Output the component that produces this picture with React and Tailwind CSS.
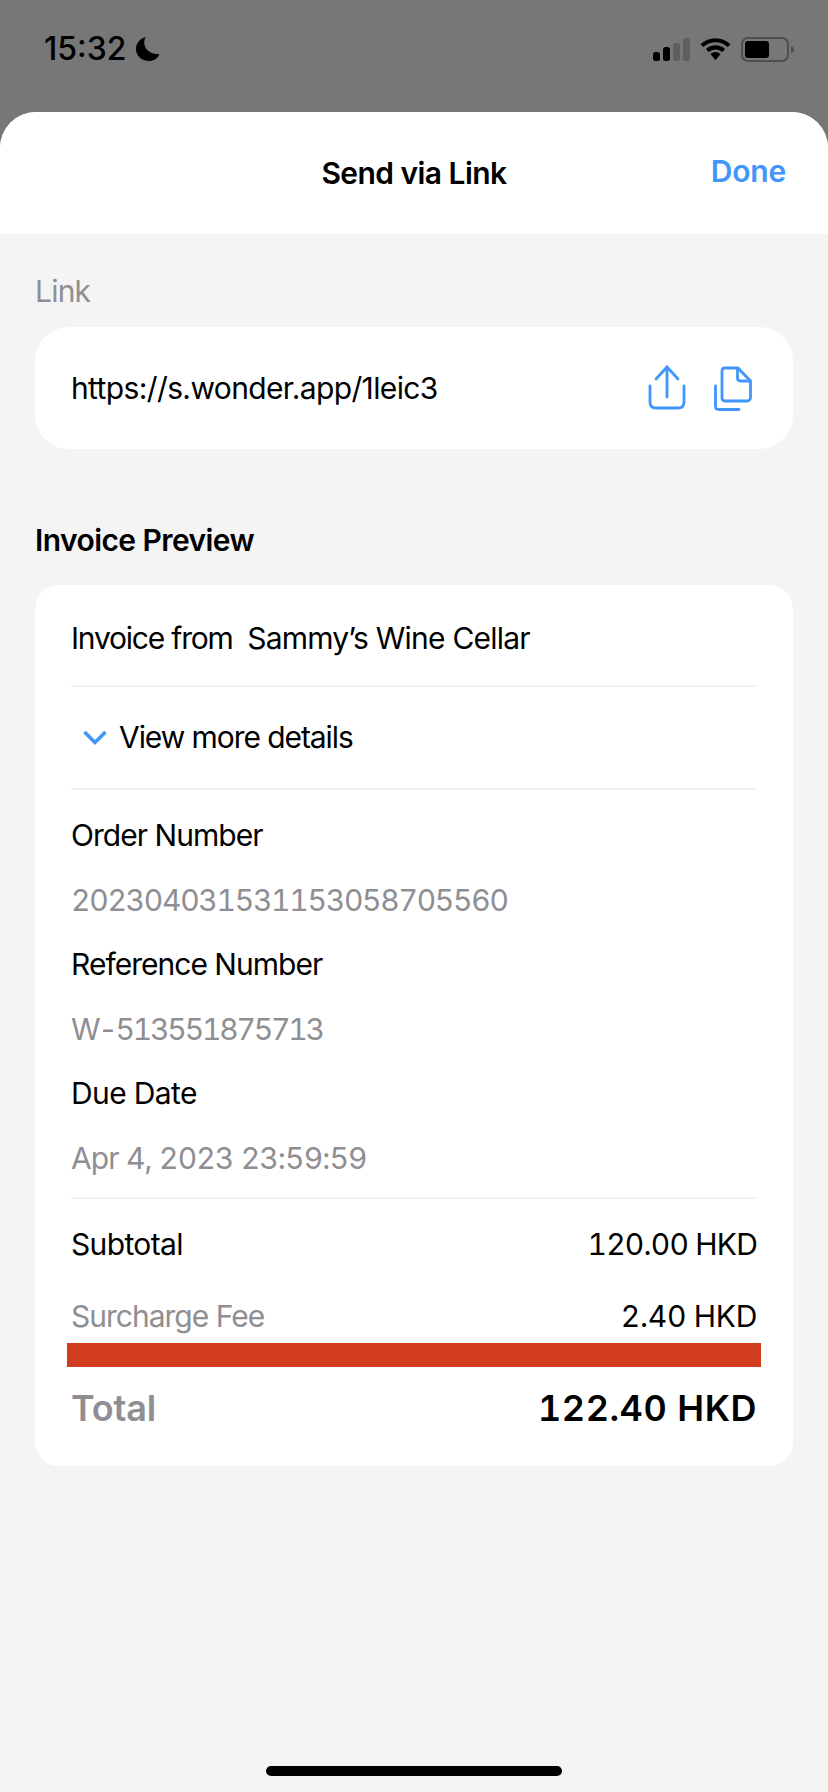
const blue = "#4096fb";

function Signal() {
  return (
    <svg width="37" height="23" viewBox="0 0 37 23" aria-hidden="true">
      <rect x="0" y="14" width="7" height="9" rx="2.5" fill="#000" />
      <rect x="10" y="9" width="7" height="14" rx="2.5" fill="#000" />
      <rect x="20" y="5" width="7" height="18" rx="2.5" fill="#5f5f5f" />
      <rect x="30" y="0" width="7" height="23" rx="2.5" fill="#5f5f5f" />
    </svg>
  );
}

function Wifi() {
  return (
    <svg width="31" height="24" viewBox="0 0 32 24" fill="none" aria-hidden="true">
      <path d="M2 8.5C10 1 22 1 30 8.5" stroke="#000" strokeWidth="4.2" />
      <path d="M7.5 13.6C12.5 9.2 19.5 9.2 24.5 13.6" stroke="#000" strokeWidth="4.2" />
      <path d="M10.8 17.2C13.8 14.4 18.2 14.4 21.2 17.2L16 23.5Z" fill="#000" />
    </svg>
  );
}

function Battery() {
  return (
    <svg width="53" height="25" viewBox="0 0 53 25" fill="none" aria-hidden="true">
      <rect x="1" y="1" width="46" height="23" rx="6" stroke="#4f4f4f" strokeWidth="2" />
      <rect x="4" y="4" width="24" height="17" rx="3" fill="#000" />
      <path d="M50 9C52 9.5 53 11 53 12.5C53 14 52 15.5 50 16Z" fill="#4f4f4f" />
    </svg>
  );
}

function Moon() {
  return (
    <svg width="26" height="26" viewBox="0 0 26 26" aria-hidden="true">
      <path d="M10.5 1C7 8 10.5 18 24.5 18.2C22.5 22.5 18.5 25 14 25C6.5 25 1 19.5 1 13C1 7.5 5 2.5 10.5 1Z" fill="#000" />
    </svg>
  );
}

function ShareIcon() {
  return (
    <svg width="38" height="46" viewBox="0 0 38 46" fill="none" stroke={blue} strokeWidth="2.8" strokeLinecap="round" strokeLinejoin="round" aria-hidden="true">
      <path d="M19 2V32" />
      <path d="M8 14L19 2L30 14" />
      <path d="M2 21V37C2 41 4 43 8 43H30C34 43 36 41 36 37V21" />
    </svg>
  );
}

function CopyIcon() {
  return (
    <svg width="38" height="46" viewBox="0 0 38 46" fill="none" stroke={blue} strokeWidth="2.8" strokeLinecap="round" strokeLinejoin="round" aria-hidden="true">
      <path d="M11 36H33C35 36 36.5 34.5 36.5 32.5V16L24 3H11C9 3 8 4.5 8 6V33C8 34.7 9 36 11 36Z" />
      <path d="M23.5 3.5V12.5C23.5 14.5 24.7 16 26.5 16H36" />
      <path d="M1.5 21V41.5C1.5 43.5 2.5 44.5 4.5 44.5H25" />
    </svg>
  );
}

function Chevron() {
  return (
    <svg width="24" height="16" viewBox="0 0 24 16" fill="none" stroke={blue} strokeWidth="3.6" aria-hidden="true">
      <path d="M1.5 2L12 12.5L22.5 2" />
    </svg>
  );
}

export default function App() {
  return (
    <div className="relative w-[828px] h-[1792px] overflow-hidden bg-[#777777] text-[30px]" style={{ fontFamily: "Inter, 'Liberation Sans', sans-serif" }}>
      <div className="h-[112px] flex justify-between pl-[44px] pr-[34px] pt-[29px]">
        <div className="flex items-start gap-[8px] h-[40px]">
          <span className="text-[32px] leading-[40px] font-medium text-black">15:32</span>
          <span className="mt-[7px]"><Moon /></span>
        </div>
        <div className="flex items-start pt-[8px]">
          <span className="mt-[1px]"><Signal /></span>
          <span className="ml-[10px]"><Wifi /></span>
          <span className="ml-[10px]"><Battery /></span>
        </div>
      </div>

      <div className="h-[1680px] bg-[#f4f4f4] rounded-t-[36px] overflow-hidden">
        <div className="h-[122px] bg-white relative flex justify-center">
          <span className="mt-[31px] h-[60px] flex items-center font-semibold text-black tracking-[-0.55px]">Send via Link</span>
          <span className="absolute right-[42px] top-[29px] h-[60px] flex items-center font-semibold text-[#4096fb] tracking-[-0.2px]">Done</span>
        </div>

        <div className="px-[35px]">
          <div className="h-[64px] mt-[24px] pt-[2px] flex items-center text-[#8e8e93] tracking-[-0.8px]">Link</div>
          <div className="mt-[5px] h-[122px] rounded-[34px] bg-white flex items-center justify-between pl-[36px] pr-[41px]">
            <span className="text-black tracking-[-0.62px]">https://s.wonder.app/1leic3</span>
            <div className="flex items-center gap-[28px]">
              <ShareIcon />
              <CopyIcon />
            </div>
          </div>

          <div className="mt-[69px] h-[44px] flex items-center font-semibold text-black tracking-[-0.58px]">Invoice Preview</div>

          <div className="mt-[23px] h-[881px] rounded-[24px] bg-white px-[36px] flex flex-col">
            <div className="h-[102px] shrink-0 pt-[6px] flex items-center border-b-2 border-[#f2f2f2] text-black whitespace-pre">
              <span className="tracking-[-1.2px]">Invoice from  </span>
              <span className="tracking-[-0.78px]">Sammy’s Wine Cellar</span>
            </div>
            <div className="h-[103px] shrink-0 flex items-center gap-[12px] pl-[12px] border-b-2 border-[#f2f2f2] text-black">
              <Chevron />
              <span className="tracking-[-1.07px]">View more details</span>
            </div>
            <div className="shrink-0 pt-[13px] h-[409px] border-b-2 border-[#f2f2f2]">
              <div className="h-[64px] flex items-center text-black tracking-[-0.96px]">Order Number</div>
              <div className="h-[65px] pt-[2px] flex items-center text-[#8e8e93] tabular-nums tracking-[-1.26px]">202304031531153058705560</div>
              <div className="h-[64px] flex items-center text-black tracking-[-0.98px]">Reference Number</div>
              <div className="h-[65px] pt-[2px] flex items-center text-[#8e8e93] tabular-nums tracking-[-2.2px]">W-513551875713</div>
              <div className="h-[64px] flex items-center text-black tracking-[-0.63px]">Due Date</div>
              <div className="h-[65px] pt-[2px] flex items-center text-[#8e8e93] tabular-nums tracking-[-0.85px]">Apr 4, 2023 23:59:59</div>
            </div>
            <div className="h-[90px] shrink-0 flex items-center justify-between text-black">
              <span className="tracking-[-0.63px]">Subtotal</span>
              <span className="tabular-nums tracking-[-0.8px]">120.00 HKD</span>
            </div>
            <div className="h-[54px] shrink-0 flex items-center justify-between">
              <span className="text-[#8e8e93] tracking-[-0.99px]">Surcharge Fee</span>
              <span className="text-black tabular-nums tracking-[-0.3px]">2.40 HKD</span>
            </div>
            <div className="h-[24px] shrink-0 ml-[-4px] mr-[-4px] bg-[#d13b20]" />
            <div className="h-[82px] shrink-0 flex items-center justify-between text-[36px] font-semibold">
              <span className="text-[#8e8e93] tracking-[-0.2px]">Total</span>
              <span className="text-black tabular-nums tracking-[0.5px]">122.40 HKD</span>
            </div>
          </div>
        </div>
      </div>

      <div className="absolute left-[266px] bottom-[16px] w-[296px] h-[10px] rounded-full bg-black" />
    </div>
  );
}
